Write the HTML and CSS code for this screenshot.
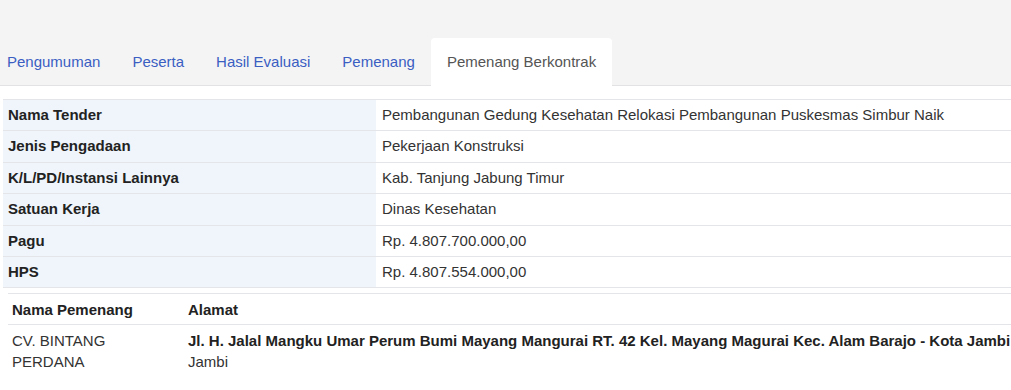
FILE: index.html
```html
<!DOCTYPE html>
<html lang="en">
<head>
    <meta charset="UTF-8">
    <meta name="viewport" content="width=device-width, initial-scale=1.0">
    <title>Pemenang Berkontrak</title>
    <link rel="stylesheet" href="styles.css">
</head>
<body>
    <div class="tab-bar">
        <a class="tab" href="#">Pengumuman</a>
        <a class="tab" href="#">Peserta</a>
        <a class="tab" href="#">Hasil Evaluasi</a>
        <a class="tab" href="#">Pemenang</a>
        <a class="tab active" href="#">Pemenang Berkontrak</a>
    </div>

    <table class="info">
        <tr><th>Nama Tender</th><td>Pembangunan Gedung Kesehatan Relokasi Pembangunan Puskesmas Simbur Naik</td></tr>
        <tr><th>Jenis Pengadaan</th><td>Pekerjaan Konstruksi</td></tr>
        <tr><th>K/L/PD/Instansi Lainnya</th><td>Kab. Tanjung Jabung Timur</td></tr>
        <tr><th>Satuan Kerja</th><td>Dinas Kesehatan</td></tr>
        <tr><th>Pagu</th><td>Rp. 4.807.700.000,00</td></tr>
        <tr><th>HPS</th><td>Rp. 4.807.554.000,00</td></tr>
    </table>

    <table class="winner">
        <colgroup>
            <col class="col-name">
            <col>
        </colgroup>
        <tr><th>Nama Pemenang</th><th>Alamat</th></tr>
        <tr>
            <td>CV. BINTANG PERDANA</td>
            <td><span class="street">Jl. H. Jalal Mangku Umar Perum Bumi Mayang Mangurai RT. 42 Kel. Mayang Magurai Kec. Alam Barajo - Kota Jambi</span><br>Jambi</td>
        </tr>
    </table>
</body>
</html>
```

FILE: styles.css
```css
body {
    margin: 0;
    font-family: "Liberation Sans", Arial, sans-serif;
    font-size: 15px;
    color: #333;
    background-color: #fff;
    overflow-x: hidden;
}

.tab-bar {
    display: flex;
    padding-top: 38px;
    background-color: #f4f4f5;
    border-bottom: 1px solid #e2e2e4;
}
.tab {
    display: block;
    padding: 15px 16px;
    line-height: 18px;
    margin-bottom: -1px;
    color: #3a5ec2;
    text-decoration: none;
    border-radius: 4px 4px 0 0;
}
.tab:first-child {
    padding-left: 7px;
}
.tab.active {
    background-color: #fff;
    color: #555;
}

.info {
    width: calc(100% - 3px);
    margin: 13px 0 0 3px;
    border-collapse: collapse;
    border-top: 1px solid #e3e5e8;
}
.info th,
.info td {
    padding: 6px 5px;
    line-height: 18.4px;
    border-bottom: 1px solid #e3e5e8;
    text-align: left;
    vertical-align: top;
}
.info th {
    width: 363px;
    background-color: #eff5fb;
    color: #222;
    font-weight: bold;
}
.info td {
    padding-left: 6px;
}

.winner {
    width: calc(100% - 8px);
    margin: 5px 0 0 8px;
    border-collapse: collapse;
    border-top: 1px solid #e3e5e8;
    table-layout: fixed;
}
.winner .col-name {
    width: 176px;
}
.winner th,
.winner td {
    padding: 5px 4px;
    line-height: 21px;
    text-align: left;
    vertical-align: top;
}
.winner th {
    padding-bottom: 4px;
    color: #222;
    border-bottom: 1px solid #e3e5e8;
}
.street {
    font-weight: bold;
    color: #222;
    white-space: nowrap;
}
```
